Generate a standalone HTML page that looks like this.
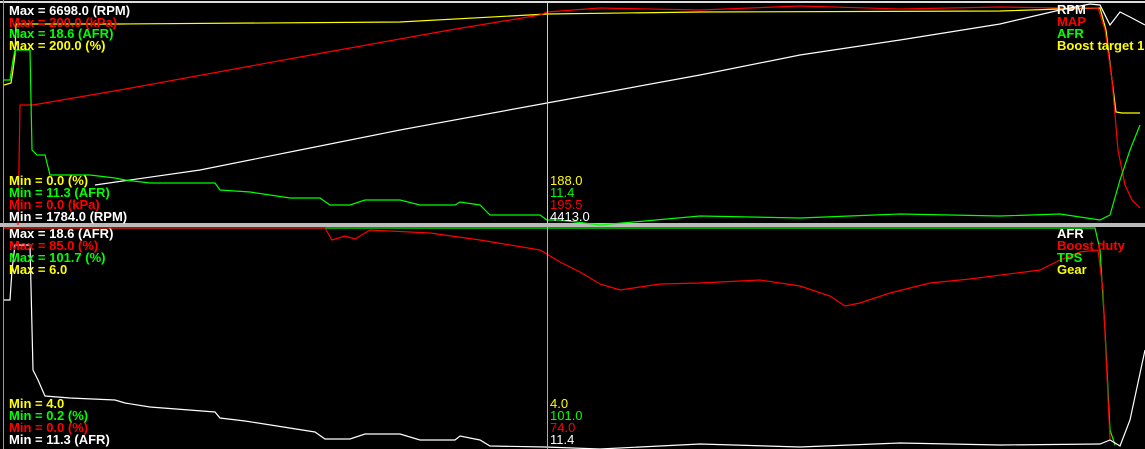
<!DOCTYPE html>
<html><head><style>
html,body{margin:0;padding:0;background:#000;width:1145px;height:449px;overflow:hidden}
svg{display:block}
text{font-family:"Liberation Sans",sans-serif;font-size:13px;font-weight:bold}
.n{font-weight:normal}
</style></head><body>
<svg width="1145" height="449" viewBox="0 0 1145 449">
<rect width="1145" height="449" fill="#000"/>
<line x1="0" y1="2" x2="1145" y2="2" stroke="#ddd" stroke-width="2"/>
<line x1="3.5" y1="0" x2="3.5" y2="449" stroke="#999" stroke-width="1"/>
<rect x="0" y="223" width="1145" height="4" fill="#bbb"/>
<g fill="none" stroke-width="1.2">
<polyline stroke="#ffff00" points="4,85 11,83 13,70 15,55 16,24 120,24 400,22 547,14 700,12 1000,11 1060,9 1100,8 1106,30 1112,80 1116,112 1122,113 1140,113"/>
<polyline stroke="#ff0000" points="18,225 20,105 33,105 120,90 300,57 450,30 540,15 547,12 600,8 700,10 800,6 900,9 1000,7 1060,8 1098,8 1105,30 1112,80 1118,150 1125,185 1132,200 1140,208"/>
<polyline stroke="#ffffff" points="95,185 200,170 300,150 400,130 547,103 700,75 800,55 900,40 1000,24 1060,10 1090,4 1100,5 1110,25 1120,12 1130,17 1145,25"/>
<polyline stroke="#00ff00" points="4,80 10,80 13,60 15,50 30,50 32,150 37,155 45,155 50,175 90,175 115,178 125,180 150,183 215,183 220,190 250,192 290,198 320,198 330,205 350,205 365,200 400,200 420,205 455,205 460,202 480,205 490,215 540,215 547,220 560,220 600,225 700,216 800,218 900,214 1000,216 1060,214 1100,220 1110,215 1120,180 1130,150 1140,125"/>
<polyline stroke="#00ff00" points="4,228 1095,228 1100,250 1105,330 1110,430 1115,445"/>
<polyline stroke="#ff0000" points="4,228 325,228 332,240 345,236 355,239 370,230 430,233 480,240 540,250 560,262 580,272 600,284 620,290 660,284 700,283 760,280 800,286 830,296 845,306 860,303 890,293 930,283 970,279 1040,270 1060,260 1080,252 1098,250 1103,290 1110,440"/>
<polyline stroke="#ffffff" points="4,300 10,300 12,270 15,245 30,245 33,370 38,380 45,396 70,398 115,400 125,403 150,407 215,412 220,418 245,421 315,432 325,439 350,439 365,434 400,434 420,440 455,440 460,436 480,440 490,446 545,447 600,449 700,444 800,447 900,443 1000,445 1100,444 1110,440 1120,446 1130,420 1145,350"/>
</g>
<line x1="547.5" y1="3" x2="547.5" y2="223" stroke="#ccc" stroke-width="1"/>
<line x1="547.5" y1="227" x2="547.5" y2="449" stroke="#6cc" stroke-width="1"/>
<text x="9" y="15" fill="#fff">Max = 6698.0 (RPM)</text>
<text x="9" y="27" fill="#f00">Max = 200.0 (kPa)</text>
<text x="9" y="38" fill="#0f0">Max = 18.6 (AFR)</text>
<text x="9" y="50" fill="#ff0">Max = 200.0 (%)</text>
<text x="9" y="185" fill="#ff0">Min = 0.0 (%)</text>
<text x="9" y="197" fill="#0f0">Min = 11.3 (AFR)</text>
<text x="9" y="209" fill="#f00">Min = 0.0 (kPa)</text>
<text x="9" y="221" fill="#fff">Min = 1784.0 (RPM)</text>
<text x="550" y="185" fill="#ff0" class="n">188.0</text>
<text x="550" y="197" fill="#0f0" class="n">11.4</text>
<text x="550" y="209" fill="#f00" class="n">195.5</text>
<text x="550" y="221" fill="#fff" class="n">4413.0</text>
<text x="1057" y="14" fill="#fff">RPM</text>
<text x="1057" y="26" fill="#f00">MAP</text>
<text x="1057" y="38" fill="#0f0">AFR</text>
<text x="1057" y="50" fill="#ff0">Boost target 1</text>
<text x="9" y="238" fill="#fff">Max = 18.6 (AFR)</text>
<text x="9" y="250" fill="#f00">Max = 85.0 (%)</text>
<text x="9" y="262" fill="#0f0">Max = 101.7 (%)</text>
<text x="9" y="274" fill="#ff0">Max = 6.0</text>
<text x="9" y="408" fill="#ff0">Min = 4.0</text>
<text x="9" y="420" fill="#0f0">Min = 0.2 (%)</text>
<text x="9" y="432" fill="#f00">Min = 0.0 (%)</text>
<text x="9" y="444" fill="#fff">Min = 11.3 (AFR)</text>
<text x="550" y="408" fill="#ff0" class="n">4.0</text>
<text x="550" y="420" fill="#0f0" class="n">101.0</text>
<text x="550" y="432" fill="#f00" class="n">74.0</text>
<text x="550" y="444" fill="#fff" class="n">11.4</text>
<text x="1057" y="238" fill="#fff">AFR</text>
<text x="1057" y="250" fill="#f00">Boost duty</text>
<text x="1057" y="262" fill="#0f0">TPS</text>
<text x="1057" y="274" fill="#ff0">Gear</text>
</svg>
</body></html>
